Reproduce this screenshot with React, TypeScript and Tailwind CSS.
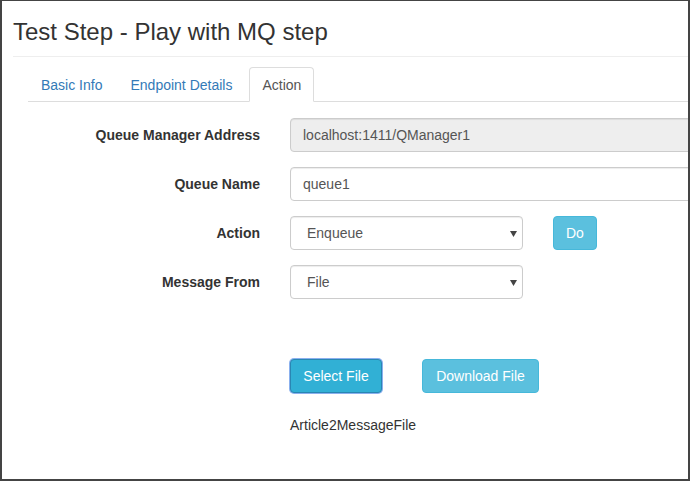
function SelectBox({ value }: { value: string }) {
  return (
    <div className="w-[233px] h-[34px] flex items-center justify-between pl-[16px] pr-[5px] border border-[#ccc] rounded-[4px] bg-white text-[#555] shadow-[inset_0_1px_1px_rgba(0,0,0,0.075)]">
      <span>{value}</span>
      <svg width="7" height="6" viewBox="0 0 7 6" className="mt-[1px]">
        <path d="M0 0h7L3.5 6z" fill="#444" />
      </svg>
    </div>
  );
}

function TextBox({ value, disabled }: { value: string; disabled?: boolean }) {
  return (
    <input
      readOnly
      value={value}
      className={
        'w-[420px] h-[34px] px-[12px] border border-[#ccc] rounded-[4px] text-[#555] outline-none shadow-[inset_0_1px_1px_rgba(0,0,0,0.075)] ' +
        (disabled ? 'bg-[#eee]' : 'bg-white')
      }
    />
  );
}

function Row({ label, children }: { label: string; children: React.ReactNode }) {
  return (
    <div className="flex items-center h-[34px] mb-[15px]">
      <label className="w-[258px] shrink-0 text-right font-bold text-[#333]">{label}</label>
      <div className="ml-[30px] flex items-center shrink-0">{children}</div>
    </div>
  );
}

export default function App() {
  const tabs = ['Basic Info', 'Endpoint Details', 'Action'];
  const active = 'Action';

  return (
    <div className="w-[690px] h-[481px] overflow-hidden bg-white border-t border-l-2 border-r-2 border-b-2 border-[#444] font-['Liberation_Sans',Arial,sans-serif] text-[14px] leading-[20px] text-[#333]">
      {/* Header */}
      <h3 className="ml-[11px] mt-[18px] pb-[11px] border-b border-[#eee] text-[24px] leading-[26px] font-normal">
        Test Step - Play with MQ step
      </h3>

      {/* Tabs */}
      <ul className="ml-[26px] mt-[10px] flex border-b border-[#ddd]">
        {tabs.map((t, i) => (
          <li
            key={t}
            className={
              (i === 1 ? 'mr-[4px] ' : 'mr-[2px] ') +
              (t === active
                ? '-mb-px px-[12px] pt-[7px] pb-[6px] border border-[#ddd] border-b-white bg-white rounded-t-[4px] text-[#555]'
                : '-mb-px px-[12px] pt-[7px] pb-[6px] border border-transparent rounded-t-[4px] text-[#337ab7]')
            }
          >
            {t}
          </li>
        ))}
      </ul>

      {/* Form */}
      <div className="mt-[16px]">
        <Row label="Queue Manager Address">
          <TextBox value="localhost:1411/QManager1" disabled />
        </Row>
        <Row label="Queue Name">
          <TextBox value="queue1" />
        </Row>
        <Row label="Action">
          <SelectBox value="Enqueue" />
          <button className="ml-[30px] h-[34px] px-[12px] rounded-[4px] border border-[#46b8da] bg-[#5bc0de] text-white">
            Do
          </button>
        </Row>
        <Row label="Message From">
          <SelectBox value="File" />
        </Row>
      </div>

      {/* File actions */}
      <div className="ml-[288px] mt-[60px] flex items-center">
        <button className="w-[92px] h-[34px] rounded-[4px] border border-[#2a86b3] bg-[#31b0d5] text-white shadow-[0_0_0_1px_#8ab0ee]">
          Select File
        </button>
        <button className="ml-[40px] w-[117px] h-[34px] rounded-[4px] border border-[#46b8da] bg-[#5bc0de] text-white">
          Download File
        </button>
      </div>

      <p className="ml-[288px] mt-[22px]">Article2MessageFile</p>
    </div>
  );
}
